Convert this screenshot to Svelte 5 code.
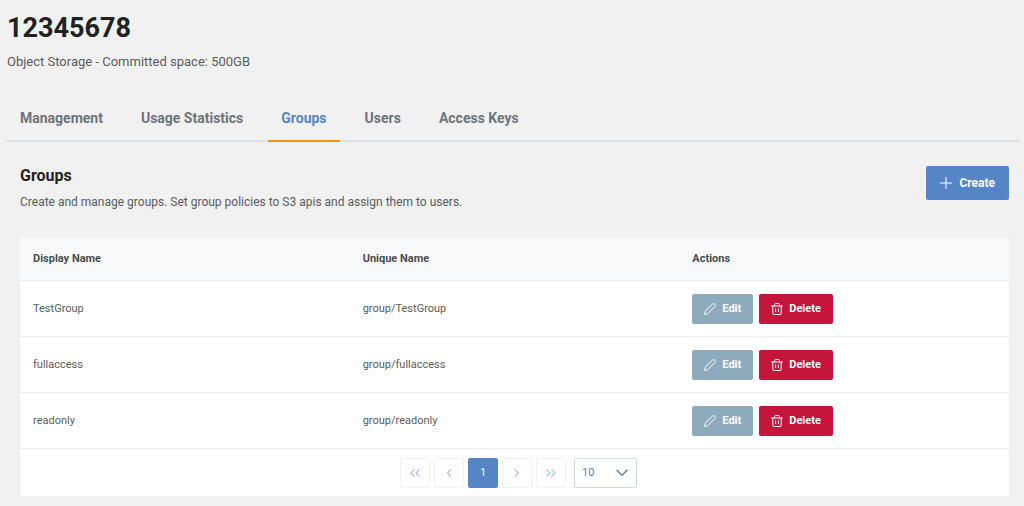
<script>
  const tabs = ['Management', 'Usage Statistics', 'Groups', 'Users', 'Access Keys']
  const groups = ['TestGroup', 'fullaccess', 'readonly']

  let active = $state('Groups')
  let rows = $state('10')
</script>

<main>
  <header>
    <h1>12345678</h1>
    <p>Object Storage - Committed space: 500GB</p>
  </header>

  <nav>
    {#each tabs as tab}
      <button class="tab" class:active={tab === active} onclick={() => (active = tab)}>{tab}</button>
    {/each}
  </nav>

  <section>
    <div class="intro">
      <div>
        <h2>Groups</h2>
        <p>Create and manage groups. Set group policies to S3 apis and assign them to users.</p>
      </div>
      <button class="btn create">
        <svg width="12" height="12" viewBox="0 0 12 12"><path d="M6 0v12M0 6h12" /></svg>
        Create
      </button>
    </div>

    <div class="card">
      <table>
        <thead>
          <tr>
            <th>Display Name</th>
            <th>Unique Name</th>
            <th>Actions</th>
          </tr>
        </thead>
        <tbody>
          {#each groups as group}
            <tr>
              <td>{group}</td>
              <td>group/{group}</td>
              <td>
                <div class="actions">
                  <button class="btn edit">
                    <svg width="12" height="12" viewBox="0 0 12 12">
                      <path d="M.7 11.3l.6-3.1 7-7a1.7 1.7 0 0 1 2.5 2.5l-7 7z" />
                    </svg>
                    Edit
                  </button>
                  <button class="btn delete">
                    <svg width="12" height="12" viewBox="0 0 12 12">
                      <path d="M.5 3h11M1.8 3v7.2q0 1.3 1.3 1.3h5.8q1.3 0 1.3-1.3V3M3.6 3V1.5q0-1 1-1h2.8q1 0 1 1V3M4.6 5.8v3M7.4 5.8v3" />
                    </svg>
                    Delete
                  </button>
                </div>
              </td>
            </tr>
          {/each}
        </tbody>
      </table>

      <div class="paginator">
        <button class="page" aria-label="First page" disabled>
          <svg width="10" height="8" viewBox="0 0 10 8"><path d="M4.3.7L1 4l3.3 3.3M9.3.7L6 4l3.3 3.3" /></svg>
        </button>
        <button class="page" aria-label="Previous page" disabled>
          <svg width="6" height="8" viewBox="0 0 6 8"><path d="M4.8.7L1.5 4l3.3 3.3" /></svg>
        </button>
        <button class="page current">1</button>
        <button class="page" aria-label="Next page" disabled>
          <svg width="6" height="8" viewBox="0 0 6 8"><path d="M1.2.7L4.5 4 1.2 7.3" /></svg>
        </button>
        <button class="page" aria-label="Last page" disabled>
          <svg width="10" height="8" viewBox="0 0 10 8"><path d="M.7.7L4 4 .7 7.3M5.7.7L9 4 5.7 7.3" /></svg>
        </button>
        <div class="rows">
          <select aria-label="Rows per page" bind:value={rows}>
            <option>10</option>
            <option>20</option>
            <option>50</option>
          </select>
          <svg width="12" height="8" viewBox="0 0 12 8"><path d="M1 1.3l5 5 5-5" /></svg>
        </div>
      </div>
    </div>
  </section>
</main>

<style>
  :global(body) {
    background: #f1f1f1;
  }

  main {
    padding: 12px 3px 11px 7px;
    color: #5c5c5c;
    font-family: Roboto, 'Liberation Sans', sans-serif;
    font-size: 11px;
    line-height: 16px;
  }

  h1,
  h2,
  p {
    margin: 0;
  }

  h1 {
    color: #222;
    font-size: 27px;
    line-height: 32px;
  }

  h2 {
    color: #222;
    font-size: 16px;
    line-height: 20px;
  }

  header p {
    margin-top: 10px;
    font-size: 13px;
  }

  button,
  select {
    font: inherit;
    cursor: pointer;
  }

  svg {
    flex: none;
    fill: none;
    stroke: currentColor;
    stroke-linecap: round;
    stroke-linejoin: round;
  }

  nav {
    display: flex;
    gap: 12px;
    margin-top: 25px;
    border-bottom: 2px solid #dee2e6;
  }

  .tab {
    margin-bottom: -2px;
    padding: 15px 13px 14px;
    border: 0;
    border-bottom: 2px solid transparent;
    background: none;
    color: #6c757d;
    font-size: 14px;
    font-weight: 700;
  }

  .tab.active {
    border-color: #ff8f00;
    color: #5585c5;
  }

  section {
    padding: 24px 12px 0 13px;
  }

  .intro {
    display: flex;
    justify-content: space-between;
    align-items: flex-start;
  }

  .intro p {
    margin-top: 8px;
    font-size: 12px;
  }

  .btn {
    display: flex;
    align-items: center;
    gap: 6px;
    height: 30px;
    padding: 0 12px;
    border: 0;
    border-radius: 2px;
    color: #fff;
    font-weight: 700;
  }

  .create {
    gap: 7px;
    height: 34px;
    padding: 0 14px;
    background: #5585c5;
    font-size: 12px;
  }

  .edit {
    background: #8eaabd;
  }

  .delete {
    background: #c4153b;
  }

  .card {
    margin-top: 28px;
    background: #fff;
  }

  table {
    width: 100%;
    border-collapse: collapse;
    table-layout: fixed;
  }

  th,
  td {
    padding: 13px;
    border-bottom: 1px solid #ebedef;
    text-align: left;
  }

  td {
    padding: 12px 13px;
    height: 31px;
  }

  th {
    background: #f8f9fb;
    color: #4c4c4c;
  }

  .actions {
    display: flex;
    gap: 6px;
  }

  .paginator {
    display: flex;
    justify-content: center;
    gap: 4px;
    padding: 9px 0 8px 8px;
    color: #5585c5;
  }

  .page {
    display: flex;
    justify-content: center;
    align-items: center;
    width: 30px;
    height: 30px;
    padding: 0;
    border: 1px solid #eff1f2;
    border-radius: 2px;
    background: #fff;
    color: #a5c0e5;
  }

  .page svg {
    stroke-width: 1.2;
  }

  .current {
    border-color: #5585c5;
    background: #5585c5;
    color: #fff;
  }

  .rows {
    display: flex;
    align-items: center;
    position: relative;
    margin-left: 4px;
  }

  .rows select {
    width: 63px;
    height: 30px;
    padding: 0 7px;
    border: 1px solid #d3d9e1;
    border-radius: 2px;
    background: #fff;
    color: #5585c5;
    appearance: none;
  }

  .rows svg {
    position: absolute;
    right: 9px;
    pointer-events: none;
    stroke-width: 1.5;
  }
</style>
